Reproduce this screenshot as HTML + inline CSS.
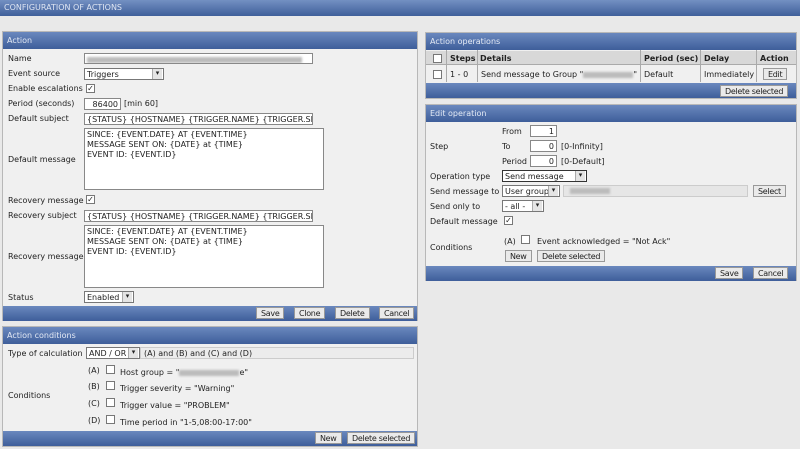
<!DOCTYPE html>
<html><head><meta charset="utf-8"><style>
*{box-sizing:border-box;margin:0;padding:0}
body{width:800px;height:449px;background:#e9e9e9;font-family:"DejaVu Sans","Liberation Sans",sans-serif;font-size:8px;color:#222;position:relative;overflow:hidden}
.a{position:absolute;white-space:nowrap}
.top{left:0;top:0;width:800px;height:16px;background:linear-gradient(#7390c2,#3f5f9a);color:#dfe6f3;padding:3px 4px;font-size:8px}
.panel{position:absolute;background:#f0f0f0;border:1px solid #b8b8b8}
.hd{position:absolute;left:0;right:0;height:17px;background:linear-gradient(#6a88be,#3e5e9a);color:#e4eaf5;padding:4px 4px}
.ft{position:absolute;left:0;right:0;height:15px;background:linear-gradient(#6a88be,#3e5e9a)}
.in{position:absolute;background:#fff;border:1px solid #888;height:12px;padding:1px 2px;font-size:8px;overflow:hidden;white-space:nowrap}
.sel{position:absolute;background:#fff;border:1px solid #777;height:12px;padding:1px 2px;font-size:8px}
.sel:after{content:"▾";position:absolute;right:1px;top:0;width:9px;height:10px;background:#e4e4e4;border-left:1px solid #aaa;text-align:center;font-size:7px}
.btn{position:absolute;background:#eaeaea;border:1px solid #999;height:12px;padding:1px 4px;font-size:8px;color:#222;white-space:nowrap;letter-spacing:-0.3px}
.cb{position:absolute;width:9px;height:9px;background:#fff;border:1px solid #777;font-size:8px;line-height:7px;text-align:center}
.blur{display:inline-block;height:6px;background:#bbb;filter:blur(1px);vertical-align:middle}
.th{position:absolute;top:50px;height:14px;border-right:1px solid #aaa}
</style></head><body>
<div class="a top">CONFIGURATION OF ACTIONS</div>

<div class="panel" style="left:2px;top:31px;width:416px;height:290px">
<div class="hd" style="top:0">Action</div>
<div class="ft" style="top:274px"></div>
</div>
<div class="a" style="left:8px;top:54px">Name</div>
<div class="in" style="left:84px;top:53px;width:229px;height:11px"><span class="blur" style="width:215px"></span></div>
<div class="a" style="left:8px;top:69px">Event source</div>
<div class="sel" style="left:84px;top:68px;width:80px">Triggers</div>
<div class="a" style="left:8px;top:84px">Enable escalations</div>
<div class="cb" style="left:86px;top:84px">✓</div>
<div class="a" style="left:8px;top:99px">Period (seconds)</div>
<div class="in" style="left:84px;top:98px;width:37px;text-align:right">86400</div>
<div class="a" style="left:124px;top:99px">[min 60]</div>
<div class="a" style="left:8px;top:114px">Default subject</div>
<div class="in" style="left:84px;top:113px;width:229px">{STATUS} {HOSTNAME} {TRIGGER.NAME} {TRIGGER.SEVER</div>
<div class="a" style="left:8px;top:155px">Default message</div>
<div class="in" style="left:84px;top:128px;width:240px;height:62px;line-height:10px;white-space:pre">SINCE: {EVENT.DATE} AT {EVENT.TIME}
MESSAGE SENT ON: {DATE} at {TIME}
EVENT ID: {EVENT.ID}</div>
<div class="a" style="left:8px;top:196px">Recovery message</div>
<div class="cb" style="left:86px;top:195px">✓</div>
<div class="a" style="left:8px;top:211px">Recovery subject</div>
<div class="in" style="left:84px;top:210px;width:229px">{STATUS} {HOSTNAME} {TRIGGER.NAME} {TRIGGER.SEVER</div>
<div class="a" style="left:8px;top:252px">Recovery message</div>
<div class="in" style="left:84px;top:225px;width:240px;height:63px;line-height:10px;white-space:pre">SINCE: {EVENT.DATE} AT {EVENT.TIME}
MESSAGE SENT ON: {DATE} at {TIME}
EVENT ID: {EVENT.ID}</div>
<div class="a" style="left:8px;top:293px">Status</div>
<div class="sel" style="left:84px;top:291px;width:50px">Enabled</div>
<div class="btn" style="left:256px;top:307px">Save</div>
<div class="btn" style="left:294px;top:307px">Clone</div>
<div class="btn" style="left:335px;top:307px">Delete</div>
<div class="btn" style="left:379px;top:307px">Cancel</div>

<div class="panel" style="left:2px;top:326px;width:416px;height:121px">
<div class="hd" style="top:0">Action conditions</div>
<div class="ft" style="top:104px"></div>
</div>
<div style="position:absolute;left:140px;top:347px;width:274px;height:12px;border:1px solid #ccc;background:#ececec"></div>
<div class="a" style="left:8px;top:349px">Type of calculation</div>
<div class="sel" style="left:86px;top:347px;width:54px">AND / OR</div>
<div class="a" style="left:144px;top:349px">(A) and (B) and (C) and (D)</div>
<div class="a" style="left:88px;top:366px">(A)</div><div class="cb" style="left:106px;top:365px"></div><div class="a" style="left:120px;top:368px">Host group = "<span class="blur" style="width:60px"></span>e"</div>
<div class="a" style="left:88px;top:382px">(B)</div><div class="cb" style="left:106px;top:381px"></div><div class="a" style="left:120px;top:384px">Trigger severity = "Warning"</div>
<div class="a" style="left:88px;top:399px">(C)</div><div class="cb" style="left:106px;top:398px"></div><div class="a" style="left:120px;top:401px">Trigger value = "PROBLEM"</div>
<div class="a" style="left:88px;top:416px">(D)</div><div class="cb" style="left:106px;top:415px"></div><div class="a" style="left:120px;top:418px">Time period in "1-5,08:00-17:00"</div>
<div class="a" style="left:8px;top:391px">Conditions</div>
<div class="btn" style="left:315px;top:432px">New</div>
<div class="btn" style="left:347px;top:432px">Delete selected</div>

<div class="panel" style="left:425px;top:32px;width:372px;height:67px">
<div class="hd" style="top:0">Action operations</div>
<div style="position:absolute;left:0;right:0;top:18px;height:14px;background:#d8d8d8;border-bottom:1px solid #aaa"></div>
<div style="position:absolute;left:0;right:0;top:33px;height:17px;background:#f0f0f0"></div>
<div class="ft" style="top:50px"></div>
</div>
<div class="th" style="left:446px;height:32px"></div>
<div class="th" style="left:477px;height:32px"></div>
<div class="th" style="left:640px;height:32px"></div>
<div class="th" style="left:700px;height:32px"></div>
<div class="th" style="left:756px;height:32px"></div>
<div class="cb" style="left:433px;top:54px"></div>
<div class="a" style="left:450px;top:54px;font-weight:bold">Steps</div>
<div class="a" style="left:480px;top:54px;font-weight:bold">Details</div>
<div class="a" style="left:644px;top:54px;font-weight:bold">Period (sec)</div>
<div class="a" style="left:704px;top:54px;font-weight:bold">Delay</div>
<div class="a" style="left:760px;top:54px;font-weight:bold">Action</div>
<div class="cb" style="left:433px;top:70px"></div>
<div class="a" style="left:450px;top:70px">1 - 0</div>
<div class="a" style="left:481px;top:70px">Send message to Group "<span class="blur" style="width:50px"></span>"</div>
<div class="a" style="left:644px;top:70px">Default</div>
<div class="a" style="left:704px;top:70px">Immediately</div>
<div class="btn" style="left:763px;top:68px">Edit</div>
<div class="btn" style="left:720px;top:85px">Delete selected</div>

<div class="panel" style="left:425px;top:104px;width:372px;height:177px">
<div class="hd" style="top:0">Edit operation</div>
<div class="ft" style="top:161px"></div>
</div>
<div class="a" style="left:502px;top:127px">From</div><div class="in" style="left:530px;top:125px;width:27px;text-align:right">1</div>
<div class="a" style="left:430px;top:142px">Step</div>
<div class="a" style="left:502px;top:142px">To</div><div class="in" style="left:530px;top:140px;width:27px;text-align:right">0</div><div class="a" style="left:561px;top:142px">[0-Infinity]</div>
<div class="a" style="left:502px;top:157px">Period</div><div class="in" style="left:530px;top:155px;width:27px;text-align:right">0</div><div class="a" style="left:561px;top:157px">[0-Default]</div>
<div class="a" style="left:430px;top:172px">Operation type</div>
<div class="sel" style="left:502px;top:170px;width:85px;border-color:#333">Send message</div>
<div class="a" style="left:430px;top:187px">Send message to</div>
<div class="sel" style="left:502px;top:185px;width:58px">User group</div>
<div style="position:absolute;left:563px;top:185px;width:185px;height:12px;background:#e6e6e6;border:1px solid #ccc"><span class="blur" style="width:40px;margin:2px 6px"></span></div>
<div class="btn" style="left:753px;top:185px">Select</div>
<div class="a" style="left:430px;top:202px">Send only to</div>
<div class="sel" style="left:502px;top:200px;width:42px">- all -</div>
<div class="a" style="left:430px;top:217px">Default message</div>
<div class="cb" style="left:504px;top:216px">✓</div>
<div class="a" style="left:504px;top:237px">(A)</div><div class="cb" style="left:521px;top:235px"></div><div class="a" style="left:537px;top:237px">Event acknowledged = "Not Ack"</div>
<div class="a" style="left:430px;top:243px">Conditions</div>
<div class="btn" style="left:505px;top:250px">New</div>
<div class="btn" style="left:537px;top:250px">Delete selected</div>
<div class="btn" style="left:715px;top:267px">Save</div>
<div class="btn" style="left:753px;top:267px">Cancel</div>
</body></html>
